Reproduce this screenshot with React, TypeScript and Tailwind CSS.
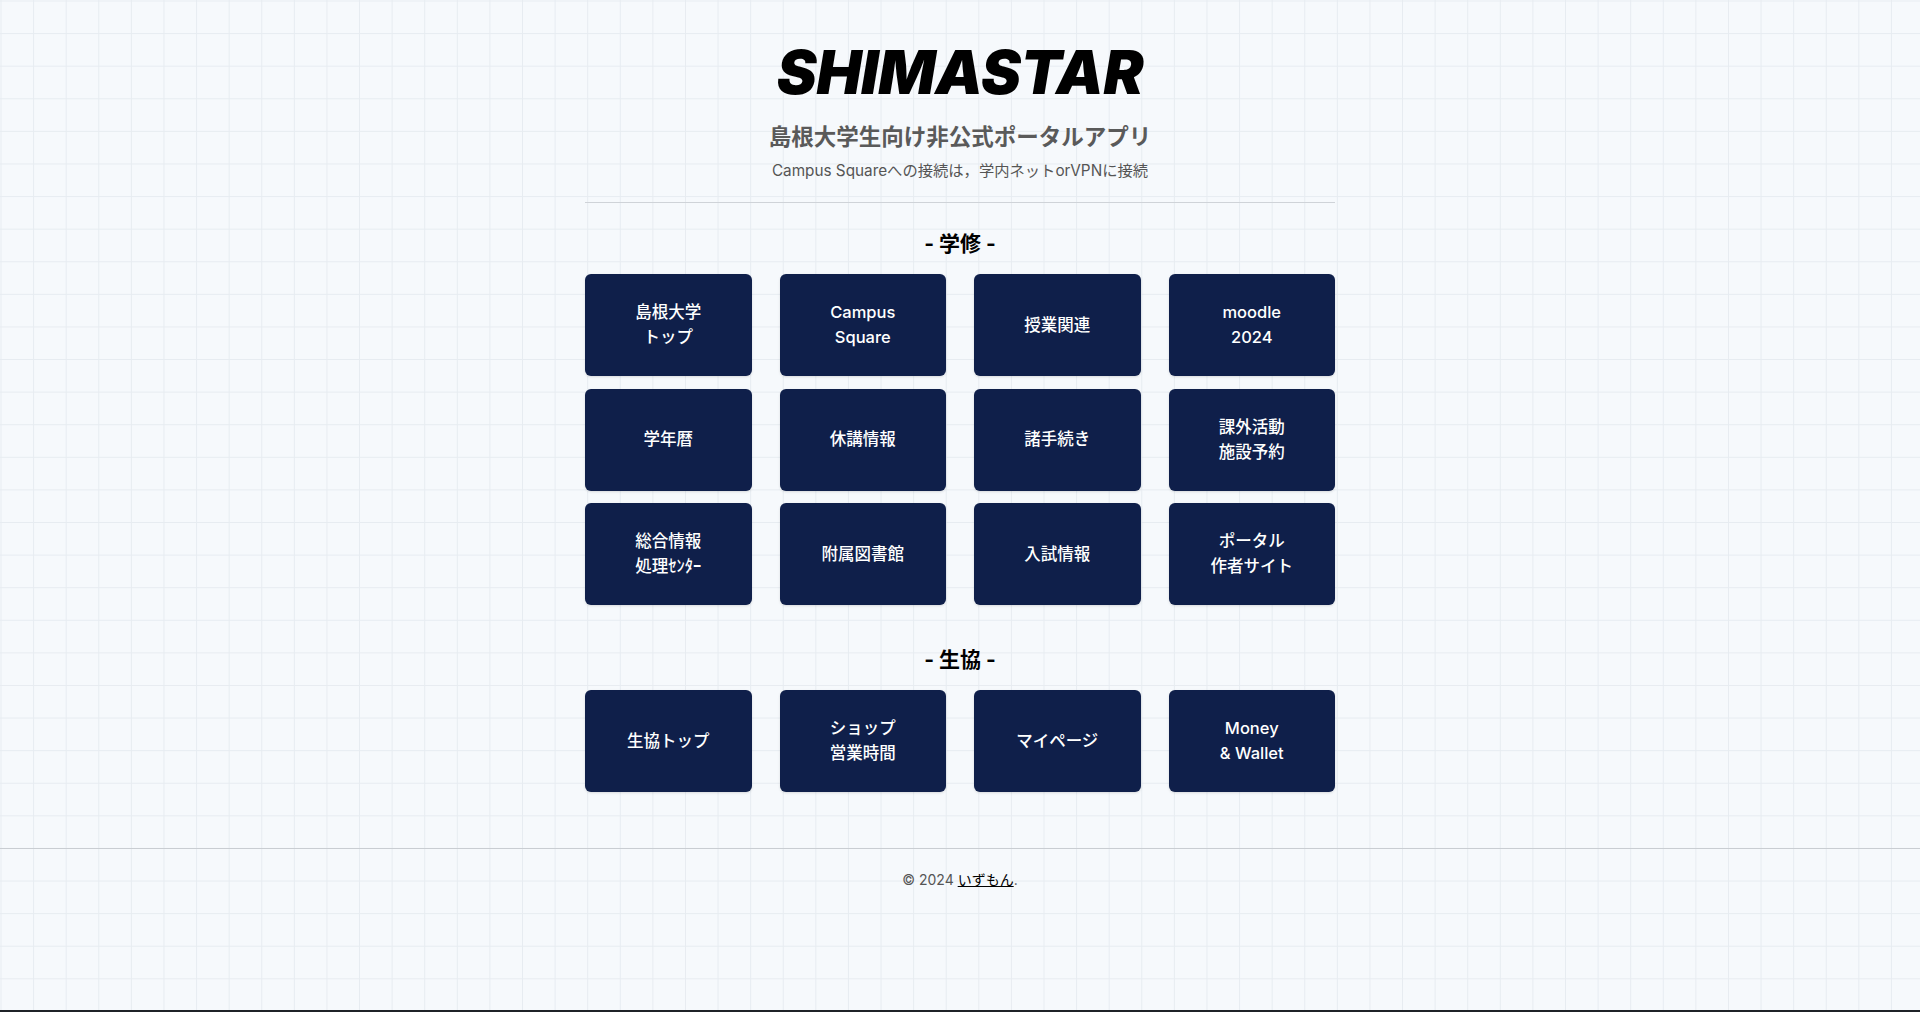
import React from "react";

const jp = "font-['Inter','Noto_Sans_CJK_JP',sans-serif]";

function Tile({ lines }: { lines: string[] }) {
  return (
    <a
      href="#"
      className="flex h-[102px] flex-col items-center justify-center rounded-md bg-[#0f1f4a] text-[16.5px] font-medium leading-[25px] text-white shadow-sm"
    >
      {lines.map((l, i) => (
        <span key={i}>{l}</span>
      ))}
    </a>
  );
}

const study: string[][] = [
  ["島根大学", "トップ"],
  ["Campus", "Square"],
  ["授業関連"],
  ["moodle", "2024"],
  ["学年暦"],
  ["休講情報"],
  ["諸手続き"],
  ["課外活動", "施設予約"],
  ["総合情報", "処理ｾﾝﾀｰ"],
  ["附属図書館"],
  ["入試情報"],
  ["ポータル", "作者サイト"],
];

const coop: string[][] = [
  ["生協トップ"],
  ["ショップ", "営業時間"],
  ["マイページ"],
  ["Money", "& Wallet"],
];

export default function App() {
  return (
    <div
      className={`${jp} flex h-[1012px] flex-col border-b-2 border-[#1f2328] bg-[#f6f9fc] bg-[linear-gradient(to_right,#e7ecf1_1px,transparent_1px),linear-gradient(to_bottom,#e7ecf1_1px,transparent_1px)] bg-[size:32.6px_32.6px] bg-[position:0.5px_0.5px] text-black`}
    >
      <main className="mx-auto flex w-[750px] flex-col items-center pt-[37px]">
        <h1 className="font-['Inter',sans-serif] text-[60px] font-black italic leading-[70px] tracking-[-0.3px]">
          SHIMASTAR
        </h1>
        <p className="mt-[15px] text-[22.5px] font-bold leading-[30px] text-[#5a5a5a]">
          島根大学生向け非公式ポータルアプリ
        </p>
        <p className="mt-[9px] text-[15.3px] leading-[20px] text-[#555]">
          Campus Squareへの接続は，学内ネットorVPNに接続
        </p>
        <div className="mt-[21px] h-px w-full bg-[#cfd3d8]" />
        <h2 className="mt-[26px] text-[21px] font-bold leading-[30px]">- 学修 -</h2>
        <div className="mt-[15px] grid w-full grid-cols-4 gap-x-[28px] gap-y-[12.5px]">
          {study.map((l, i) => (
            <Tile key={i} lines={l} />
          ))}
        </div>
        <h2 className="mt-[40px] text-[21px] font-bold leading-[30px]">- 生協 -</h2>
        <div className="mt-[15px] grid w-full grid-cols-4 gap-x-[28px]">
          {coop.map((l, i) => (
            <Tile key={i} lines={l} />
          ))}
        </div>
      </main>
      <footer className="mt-[56px] border-t border-[#c9cdd2] pt-[21px] text-center text-[14px] leading-[20px] text-[#555]">
        © 2024{" "}
        <a href="#" className="text-black underline">
          いずもん
        </a>
        .
      </footer>
    </div>
  );
}
